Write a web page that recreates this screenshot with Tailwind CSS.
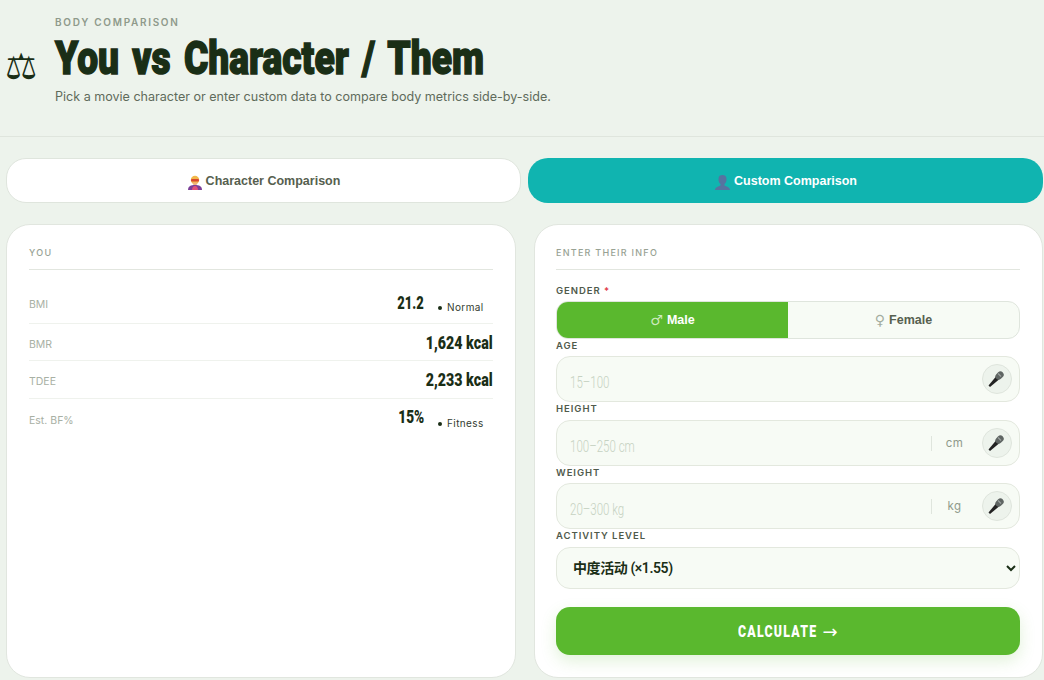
<!DOCTYPE html>
<html lang="en">
<head>
    <meta charset="UTF-8">
    <title>Body Comparison</title>
    <script src="https://cdn.jsdelivr.net/npm/@tailwindcss/browser@4"></script>
</head>
<body class="bg-[#edf3ec] font-['Inter',sans-serif] overflow-hidden h-[680px]">
    <!-- Header -->
    <header class="h-[137px] border-b border-[#dfe5dd] pl-[5px] flex">
        <div class="w-[50px] pt-[47px] font-['DejaVu_Sans'] text-[36px] leading-[40px] text-[#1a2e16]">⚖</div>
        <div class="pt-[15px]">
            <div class="text-[10px] leading-[14px] font-semibold tracking-[0.17em] text-[#8f9a8b]">BODY COMPARISON</div>
            <h1 class="mt-[6px] h-[46px] font-['Roboto'] font-black text-[46px] leading-[46px] text-[#1a2e16] whitespace-nowrap origin-left scale-x-[0.808] [word-spacing:5px] [-webkit-text-stroke:1.5px_#1a2e16]">You vs Character / Them</h1>
            <p class="mt-[6px] text-[12.55px] leading-[20px] text-[#5f6b5b]">Pick a movie character or enter custom data to compare body metrics side-by-side.</p>
        </div>
    </header>

    <!-- Tabs -->
    <div class="grid grid-cols-2 gap-[7px] pl-[6px] pr-px mt-[21px]">
        <button class="h-[45px] pt-[2px] rounded-[20px] bg-white border border-[#dfe5dd] flex items-center justify-center gap-[3px] font-['Liberation_Sans'] font-bold text-[12.5px] text-[#56604f]">
            <svg width="16" height="16" viewBox="0 0 16 16">
                <path d="M1 16c0-4 3-5 7-5s7 1 7 5z" fill="#7b3f98"/>
                <path d="M5 16c0-2 1-4 3-4s3 2 3 4z" fill="#e0507a"/>
                <circle cx="8" cy="6" r="4.2" fill="#f2b84b"/>
                <rect x="4" y="5" width="8" height="2.6" rx="1" fill="#d9472f"/>
                <path d="M5.5 8.5h5L9.5 11h-3z" fill="#f0b27a"/>
            </svg>
            Character Comparison
        </button>
        <button class="h-[45px] pt-[2px] rounded-[20px] bg-[#10b4b0] flex items-center justify-center gap-[3px] font-['Liberation_Sans'] font-bold text-[12.5px] text-white">
            <svg width="17" height="16" viewBox="0 0 17 16">
                <path d="M1 16c0-3 4-3.500 5.500-4.500v-1.500C5 9 4.500 7 4.500 5a4 4 0 0 1 8 0c0 2-.5 4-2 5v1.500C12 12.500 16 13 16 16z" fill="#5673a0"/>
            </svg>
            Custom Comparison
        </button>
    </div>

    <!-- Cards -->
    <div class="grid grid-cols-[510px_509px] gap-[18px] pl-[6px] mt-[21px]">
        <section class="h-[454px] rounded-[24px] bg-white border border-[#e1e6df] px-[22px] pt-[21px]">
            <div class="h-[24px] border-b border-[#e2e6df] text-[9px] leading-[14px] font-medium tracking-[0.15em] text-[#98a294]">YOU</div>
            <div class="mt-[17px] h-[37px] flex items-start justify-between border-b border-[#eff2ed]">
                <span class="mt-[10px] text-[10.500px] leading-[16px] text-[#a8b0a4]">BMI</span>
                <span class="mt-[6px] flex items-start">
                    <span class="inline-block origin-right scale-x-[0.72] font-['Roboto'] font-black text-[18px] leading-[20px] text-[#1a2e16]">21.2</span>
                    <span class="w-[69px] pl-[14px] mt-[6px] text-[10px] leading-[16px] tracking-[0.04em] text-[#333b2f] whitespace-nowrap"><span class="inline-block w-[4px] h-[4px] rounded-full bg-[#1a2e16] mr-[5px] mb-[1px]"></span>Normal</span>
                </span>
            </div>
            <div class="h-[37px] flex items-center justify-between border-b border-[#eff2ed]">
                <span class="mt-[6px] text-[10.500px] leading-[16px] text-[#a8b0a4]">BMR</span>
                <span class="mt-[2px] inline-block origin-right scale-x-[0.79] font-['Roboto'] font-black text-[18px] leading-[20px] text-[#1a2e16]">1,624 kcal</span>
            </div>
            <div class="h-[38px] flex items-center justify-between border-b border-[#eff2ed]">
                <span class="mt-[4px] text-[10.500px] leading-[16px] text-[#a8b0a4]">TDEE</span>
                <span class="inline-block origin-right scale-x-[0.79] font-['Roboto'] font-black text-[18px] leading-[20px] text-[#1a2e16]">2,233 kcal</span>
            </div>
            <div class="h-[38px] flex items-center justify-between">
                <span class="mt-[6px] text-[10.500px] leading-[16px] text-[#a8b0a4]">Est. BF%</span>
                <span class="mt-[1px] flex items-start">
                    <span class="inline-block origin-right scale-x-[0.76] font-['Roboto'] font-black text-[18px] leading-[20px] text-[#1a2e16]">15%</span>
                    <span class="w-[69px] pl-[14px] mt-[8px] text-[10px] leading-[16px] tracking-[0.04em] text-[#333b2f] whitespace-nowrap"><span class="inline-block w-[4px] h-[4px] rounded-full bg-[#1a2e16] mr-[5px] mb-[1px]"></span>Fitness</span>
                </span>
            </div>
        </section>

        <section class="h-[454px] rounded-[24px] bg-white border border-[#e1e6df] pl-[21px] pr-[22px] pt-[21px]">
            <div class="h-[24px] border-b border-[#e2e6df] text-[9px] leading-[14px] font-medium tracking-[0.14em] text-[#98a294]">ENTER THEIR INFO</div>
            <div class="mt-[14px] text-[9.500px] leading-[14px] font-semibold tracking-[0.1em] text-[#4f5a4b]">GENDER <span class="text-[#e0323f]">*</span></div>
            <div class="mt-[3px] h-[38px] grid grid-cols-2 rounded-[12px] border border-[#dfe5dd] bg-[#f7fbf5] overflow-hidden font-['Liberation_Sans'] font-bold text-[12.5px]">
                <button class="bg-[#5ab82e] text-white flex items-center justify-center gap-[4px]"><span class="font-['DejaVu_Sans'] font-normal text-[14px] text-[#cdeabd]">♂</span> Male</button>
                <button class="text-[#56604f] flex items-center justify-center gap-[4px]"><span class="font-['DejaVu_Sans'] font-normal text-[14px] text-[#a3ad9f]">♀</span> Female</button>
            </div>

            <label class="block -mb-[2px] text-[9.500px] leading-[14px] font-semibold tracking-[0.1em] text-[#4f5a4b]">AGE</label>
            <div class="mt-[5px] h-[46px] flex items-center rounded-[14px] border border-[#e3e8de] bg-[#f7fbf5] pl-[13px] pr-[7px]">
                <input type="text" placeholder="15–100" class="flex-1 min-w-0 mt-[7px] outline-none origin-left scale-x-[0.72] font-['Roboto'] font-light text-[16px] placeholder:text-[#c6d2c2]">
                <button class="w-[30px] h-[30px] rounded-full border border-[#dfe5dd] bg-[#edf3ec] flex items-center justify-center">
                    <svg width="18" height="18" viewBox="0 0 18 18">
                        <path d="M.5 15.500 8 6.500l3 3L2 17z" fill="#222"/>
                        <rect x="7" y="2.300" width="9" height="6.500" rx="3.200" transform="rotate(-45 11.500 5.500)" fill="#5f6563"/>
                        <path d="M10 3.500 13 6.500" stroke="#9aa09e" stroke-width="1.200"/>
                    </svg>
                </button>
            </div>

            <label class="block -mb-[2px] text-[9.500px] leading-[14px] font-semibold tracking-[0.1em] text-[#4f5a4b]">HEIGHT</label>
            <div class="mt-[6px] h-[46px] flex items-center rounded-[14px] border border-[#e3e8de] bg-[#f7fbf5] pl-[13px] pr-[7px]">
                <input type="text" placeholder="100–250 cm" class="flex-1 min-w-0 mt-[7px] outline-none origin-left scale-x-[0.72] font-['Roboto'] font-light text-[16px] placeholder:text-[#c6d2c2]">
                <span class="w-[46px] mr-[5px] h-[15px] border-l border-[#dfe5dd] text-center text-[11.5px] leading-[15px] tracking-[0.03em] text-[#8f9a8b]">cm</span>
                <button class="w-[30px] h-[30px] rounded-full border border-[#dfe5dd] bg-[#edf3ec] flex items-center justify-center">
                    <svg width="18" height="18" viewBox="0 0 18 18">
                        <path d="M.5 15.500 8 6.500l3 3L2 17z" fill="#222"/>
                        <rect x="7" y="2.300" width="9" height="6.500" rx="3.200" transform="rotate(-45 11.500 5.500)" fill="#5f6563"/>
                        <path d="M10 3.500 13 6.500" stroke="#9aa09e" stroke-width="1.200"/>
                    </svg>
                </button>
            </div>

            <label class="block -mb-[2px] text-[9.500px] leading-[14px] font-semibold tracking-[0.1em] text-[#4f5a4b]">WEIGHT</label>
            <div class="mt-[5px] h-[46px] flex items-center rounded-[14px] border border-[#e3e8de] bg-[#f7fbf5] pl-[13px] pr-[7px]">
                <input type="text" placeholder="20–300 kg" class="flex-1 min-w-0 mt-[7px] outline-none origin-left scale-x-[0.72] font-['Roboto'] font-light text-[16px] placeholder:text-[#c6d2c2]">
                <span class="w-[46px] mr-[5px] h-[15px] border-l border-[#dfe5dd] text-center text-[11.5px] leading-[15px] tracking-[0.03em] text-[#8f9a8b]">kg</span>
                <button class="w-[30px] h-[30px] rounded-full border border-[#dfe5dd] bg-[#edf3ec] flex items-center justify-center">
                    <svg width="18" height="18" viewBox="0 0 18 18">
                        <path d="M.5 15.500 8 6.500l3 3L2 17z" fill="#222"/>
                        <rect x="7" y="2.300" width="9" height="6.500" rx="3.200" transform="rotate(-45 11.500 5.500)" fill="#5f6563"/>
                        <path d="M10 3.500 13 6.500" stroke="#9aa09e" stroke-width="1.200"/>
                    </svg>
                </button>
            </div>

            <label class="block -mb-[2px] text-[9.500px] leading-[14px] font-semibold tracking-[0.1em] text-[#4f5a4b]">ACTIVITY LEVEL</label>
            <select class="mt-[6px] w-full h-[42px] rounded-[14px] border border-[#e3e8de] bg-[#f7fbf5] pl-[12px] pr-[4px] outline-none font-['Roboto','Noto_Sans_CJK_SC',sans-serif] font-semibold text-[14px] tracking-[-0.03em] text-[#1a2e16]">
                <option>中度活动 (×1.55)</option>
            </select>
            <button class="mt-[18px] w-full h-[48px] pt-px rounded-[14px] bg-[#5ab82e] shadow-[0_6px_16px_rgba(90,184,46,0.18)] flex items-center justify-center gap-[4px] text-white">
                <span class="inline-block w-[80px] origin-left scale-x-[0.77] whitespace-nowrap text-left font-['Roboto'] font-black text-[16px] tracking-[0.1em]">CALCULATE</span>
                <span class="font-['DejaVu_Sans'] text-[18px] leading-[20px]">→</span>
            </button>
        </section>
    </div>
</body>
</html>
